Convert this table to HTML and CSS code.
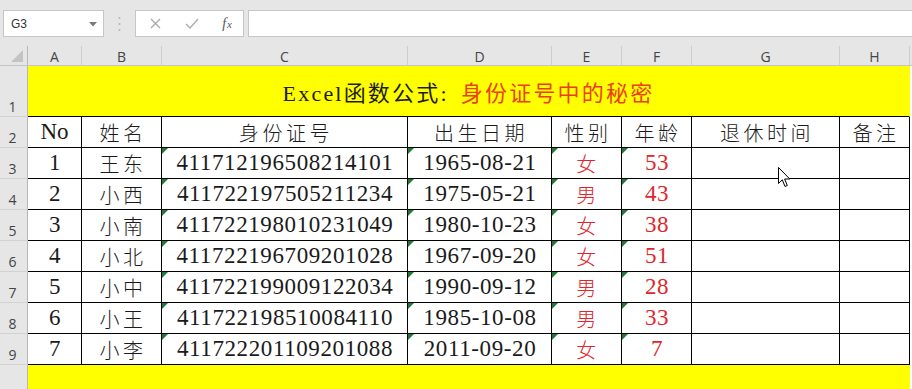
FILE: index.html
```html
<!DOCTYPE html>
<html>
<head>
<meta charset="utf-8">
<link rel="stylesheet" href="styles.css">
</head>
<body>
<div class="app">
  <div class="toolbar">
    <div class="namebox">
      <span class="ref">G3</span>
      <svg class="caret" width="8" height="5" viewBox="0 0 8 5"><path d="M0 0H8L4 4.5Z" fill="#7a7a7a"/></svg>
    </div>
    <div class="sep">
      <svg width="3" height="16" viewBox="0 0 3 16"><circle cx="1.5" cy="2" r="1" fill="#b4b4b4"/><circle cx="1.5" cy="8" r="1" fill="#b4b4b4"/><circle cx="1.5" cy="14" r="1" fill="#b4b4b4"/></svg>
    </div>
    <div class="fbtns">
      <svg width="11" height="11" viewBox="0 0 11 11"><path d="M1 1L10 10M10 1L1 10" stroke="#a9a9a9" stroke-width="1.3" fill="none"/></svg>
      <svg width="14" height="11" viewBox="0 0 14 11"><path d="M1 6L5 10L13 1" stroke="#a9a9a9" stroke-width="1.3" fill="none"/></svg>
      <span class="fx"><i>f</i><span class="fxx">x</span></span>
    </div>
    <div class="finput"></div>
  </div>

  <div class="sheet">
    <div class="corner"><svg width="12" height="12" viewBox="0 0 12 12"><path d="M12 0V12H0Z" fill="#c3c3c3"/></svg></div>
    <div class="ch">A</div><div class="ch">B</div><div class="ch">C</div><div class="ch">D</div>
    <div class="ch">E</div><div class="ch">F</div><div class="ch">G</div><div class="ch">H</div><div class="ch end"></div>

    <div class="rh">1</div>
    <div class="title"><span class="t-black">Excel函数公式:</span><span class="t-red">身份证号中的秘密</span></div>
    <div class="fill"></div>

    <div class="rh">2</div>
    <div class="c hd num">No</div><div class="c hd">姓名</div><div class="c hd">身份证号</div><div class="c hd">出生日期</div>
    <div class="c hd">性别</div><div class="c hd">年龄</div><div class="c hd">退休时间</div><div class="c hd">备注</div><div class="fill"></div>

    <div class="rh">3</div>
    <div class="c num">1</div><div class="c cn">王东</div><div class="c num tri">411712196508214101</div><div class="c num tri">1965-08-21</div>
    <div class="c cn red tri">女</div><div class="c num red tri">53</div><div class="c"></div><div class="c"></div><div class="fill"></div>

    <div class="rh">4</div>
    <div class="c num">2</div><div class="c cn">小西</div><div class="c num tri">411722197505211234</div><div class="c num tri">1975-05-21</div>
    <div class="c cn red tri">男</div><div class="c num red tri">43</div><div class="c"></div><div class="c"></div><div class="fill"></div>

    <div class="rh">5</div>
    <div class="c num">3</div><div class="c cn">小南</div><div class="c num tri">411722198010231049</div><div class="c num tri">1980-10-23</div>
    <div class="c cn red tri">女</div><div class="c num red tri">38</div><div class="c"></div><div class="c"></div><div class="fill"></div>

    <div class="rh">6</div>
    <div class="c num">4</div><div class="c cn">小北</div><div class="c num tri">411722196709201028</div><div class="c num tri">1967-09-20</div>
    <div class="c cn red tri">女</div><div class="c num red tri">51</div><div class="c"></div><div class="c"></div><div class="fill"></div>

    <div class="rh">7</div>
    <div class="c num">5</div><div class="c cn">小中</div><div class="c num tri">411722199009122034</div><div class="c num tri">1990-09-12</div>
    <div class="c cn red tri">男</div><div class="c num red tri">28</div><div class="c"></div><div class="c"></div><div class="fill"></div>

    <div class="rh">8</div>
    <div class="c num">6</div><div class="c cn">小王</div><div class="c num tri">411722198510084110</div><div class="c num tri">1985-10-08</div>
    <div class="c cn red tri">男</div><div class="c num red tri">33</div><div class="c"></div><div class="c"></div><div class="fill"></div>

    <div class="rh">9</div>
    <div class="c num">7</div><div class="c cn">小李</div><div class="c num tri">411722201109201088</div><div class="c num tri">2011-09-20</div>
    <div class="c cn red tri">女</div><div class="c num red tri">7</div><div class="c"></div><div class="c"></div><div class="fill"></div>

    <div class="rh last"></div>
    <div class="band"></div>
    <div class="fill"></div>
  </div>

  <svg class="cursor" width="13" height="21" viewBox="0 0 13 21"><path d="M0.5 0.5V16.5L4.3 12.8L7 19.5L9.3 18.5L6.6 12H11.8Z" fill="#fff" stroke="#000" stroke-width="1"/></svg>
</div>
</body>
</html>
```
FILE: styles.css
```css
* { box-sizing: border-box; }
html, body { margin: 0; padding: 0; }
body { width: 912px; height: 389px; overflow: hidden; background: #fff; font-family: "Liberation Sans", Arial, sans-serif; }

.app { position: relative; width: 912px; height: 389px; overflow: hidden; }

.toolbar {
  height: 46px;
  background: #e6e6e6;
  display: flex;
  align-items: flex-start;
  padding: 10px 0 0 3px;
}
.namebox {
  width: 101px; height: 27px;
  background: #fff;
  border: 1px solid #c6c6c6;
  display: flex; align-items: center; justify-content: space-between;
  padding: 0 6px 0 7px;
}
.ref { font-size: 12px; color: #333; }
.caret { margin-top: 1px; }
.sep { width: 31px; height: 27px; display: flex; align-items: center; justify-content: center; }
.fbtns {
  width: 109px; height: 27px;
  background: #fff;
  border: 1px solid #c6c6c6;
  display: flex; align-items: center; justify-content: space-between;
  padding: 0 11px 0 14px;
}
.fx { font-family: "Liberation Serif", serif; font-size: 14px; color: #555; line-height: 1; font-style: italic; }
.fx i { font-style: italic; }
.fxx { font-size: 11px; margin-left: 1px; }
.finput { flex: 1; height: 27px; margin-left: 4px; background: #fff; border: 1px solid #c6c6c6; border-right: none; }

.sheet {
  display: grid;
  grid-template-columns: 28px 54px 80px 246px 144px 70px 70px 148px 70px 2px;
  grid-template-rows: 20px 51px repeat(8, 31px) 24px;
}

.corner, .ch {
  background: #e6e6e6;
  border-right: 1px solid #cdcdcd;
  border-bottom: 1px solid #c4c4c4;
}
.corner { display: flex; align-items: flex-end; justify-content: flex-end; padding: 0 4px 3px 0; border-right-color: #b8b8b8; }
.ch {
  font-family: "Open Sans", "Liberation Sans", sans-serif;
  font-size: 14px; color: #444;
  display: flex; align-items: center; justify-content: center;
  padding-top: 1px;
}
.ch.end { border-right: none; }

.rh {
  background: #e6e6e6;
  border-right: 1px solid #b8b8b8;
  border-bottom: 1px solid #d2d2d2;
  font-family: "Open Sans", "Liberation Sans", sans-serif;
  font-size: 14px; color: #444;
  display: flex; align-items: flex-end; justify-content: center;
  padding: 0 2px 2px 0;
  line-height: 1;
}
.rh.last { border-bottom: none; }

.title {
  grid-column: 2 / span 8;
  background: #ffff00;
  border-bottom: 1px solid #000;
  border-right: 1px solid #ffff00;
  display: flex; align-items: center; justify-content: center;
  font-family: "Liberation Serif", "Noto Sans CJK SC", serif;
  font-size: 22px;
  letter-spacing: 2.2px;
  padding-left: 0;
}
.t-black { color: #1c1c1c; }
.t-red { color: #ea3f12; margin-left: 12px; }

.band {
  grid-column: 2 / span 8;
  background: #ffff00;
}

.fill { background: #fff; }

.c {
  position: relative;
  border-right: 1px solid #000;
  border-bottom: 1px solid #000;
  display: flex; align-items: center; justify-content: center;
  color: #1a1a1a;
  white-space: nowrap;
}
.num {
  font-family: "Liberation Serif", serif;
  font-size: 23px;
  letter-spacing: 0.6px;
  padding-left: 1px;
}
.cn, .hd {
  font-family: "Noto Sans CJK SC", "Noto Sans CJK JP", sans-serif;
  font-size: 20px;
  font-weight: 300;
  letter-spacing: 3.5px;
  padding-left: 3px;
}
.hd.num { font-family: "Liberation Serif", serif; font-size: 23px; letter-spacing: 0; font-weight: 400; padding-left: 0; }
.red { color: #e0262a; }

.tri::before {
  content: "";
  position: absolute;
  left: 0; top: 0;
  width: 0; height: 0;
  border-top: 6px solid #1f7a33;
  border-right: 6px solid transparent;
}

.cursor { position: absolute; left: 778px; top: 167px; }
```
